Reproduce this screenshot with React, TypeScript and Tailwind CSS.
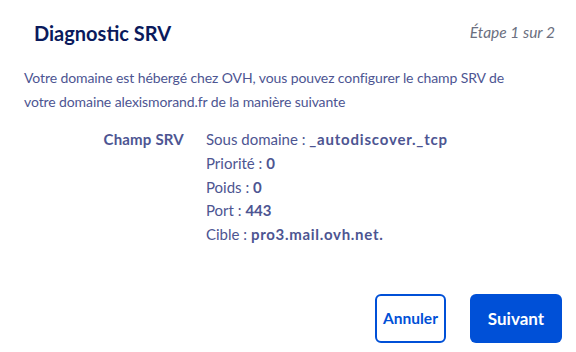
import React from "react";

export default function App() {
  return (
    <div
      className="w-[576px] h-[352px] bg-white flex flex-col"
      style={{ fontFamily: "Lato, 'Open Sans', sans-serif" }}
    >
      <div className="flex items-center justify-between pl-[34px] pr-[21px] pt-[20px] h-[46px]">
        <h1 className="text-[20px] font-bold text-[#0a1a5c] leading-none">Diagnostic SRV</h1>
        <span className="text-[15.5px] italic text-[#6b6f80] leading-none">Étape 1 sur 2</span>
      </div>
      <p className="mt-[20px] w-[522px] pl-[24px] text-[14px] tracking-[-0.1px] leading-[24px] text-[#4d5592]">
        Votre domaine est hébergé chez OVH, vous pouvez configurer le champ SRV de votre domaine alexismorand.fr de la manière suivante
      </p>
      <div className="mt-[14px] flex text-[15px] leading-[23.8px] text-[#4d5592]">
        <div className="w-[206px] pr-[22px] text-right font-bold tracking-[0.2px]">Champ SRV</div>
        <div className="flex flex-col">
          <span>Sous domaine : <b className="tracking-[0.8px]">_autodiscover._tcp</b></span>
          <span>Priorité : <b>0</b></span>
          <span>Poids : <b>0</b></span>
          <span>Port : <b>443</b></span>
          <span>Cible : <b className="tracking-[0.7px]">pro3.mail.ovh.net.</b></span>
        </div>
      </div>
      <div className="mt-auto mb-[9px] flex justify-end gap-[24px] pr-[14px]">
        <button className="h-[49px] w-[71px] rounded-[6px] border-2 border-[#0050d7] text-[#0050d7] font-bold text-[15.5px] bg-white">
          Annuler
        </button>
        <button className="h-[49px] w-[92px] rounded-[6px] bg-[#0050d7] text-white font-bold text-[17px]">
          Suivant
        </button>
      </div>
    </div>
  );
}
